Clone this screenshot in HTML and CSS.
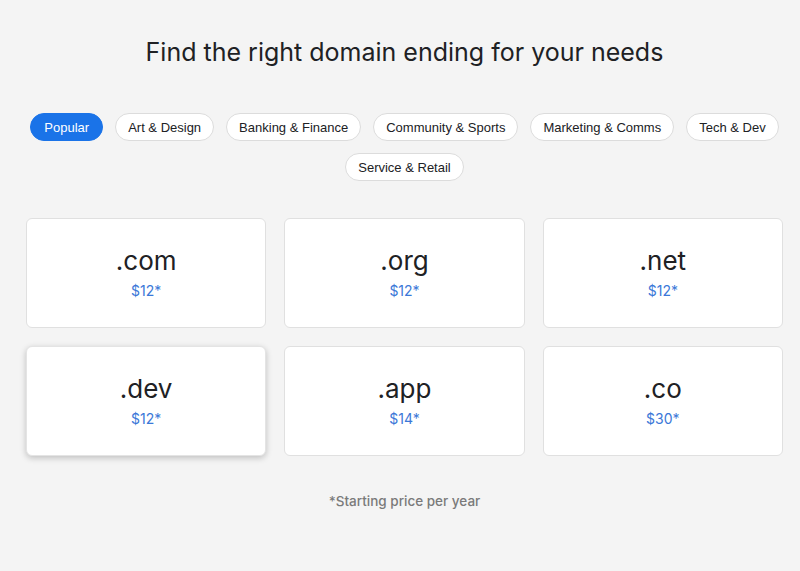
FILE: index.html
```html
<!doctype html>
<html lang="en">
  <head>
    <meta charset="UTF-8" />
    <meta name="viewport" content="width=device-width, initial-scale=1.0" />
    <title>Domain endings</title>
    <link rel="stylesheet" href="styles.css">
  </head>
  <body>
    <div class="page">
      <h1>Find the right domain ending for your needs</h1>

      <div class="chips">
        <button class="chip active">Popular</button>
        <button class="chip">Art &amp; Design</button>
        <button class="chip">Banking &amp; Finance</button>
        <button class="chip">Community &amp; Sports</button>
        <button class="chip">Marketing &amp; Comms</button>
        <button class="chip">Tech &amp; Dev</button>
        <button class="chip">Service &amp; Retail</button>
      </div>

      <div class="grid">
        <div class="card">
          <div class="tld">.com</div>
          <div class="price">$12*</div>
        </div>
        <div class="card">
          <div class="tld">.org</div>
          <div class="price">$12*</div>
        </div>
        <div class="card">
          <div class="tld">.net</div>
          <div class="price">$12*</div>
        </div>
        <div class="card hover">
          <div class="tld">.dev</div>
          <div class="price">$12*</div>
        </div>
        <div class="card">
          <div class="tld">.app</div>
          <div class="price">$14*</div>
        </div>
        <div class="card">
          <div class="tld">.co</div>
          <div class="price">$30*</div>
        </div>
      </div>

      <p class="note">*Starting price per year</p>
    </div>
  </body>
</html>
```

FILE: styles.css
```css
body {
  margin: 0;
  background-color: #f4f4f4;
  font-family: Inter, "Liberation Sans", sans-serif;
}
.page {
  width: 757px;
  margin-left: 26px;
  padding-top: 36px;
}
h1 {
  margin: 0;
  font-size: 25px;
  line-height: 32px;
  font-weight: 400;
  color: #202124;
  text-align: center;
}
.chips {
  margin-top: 45px;
  display: flex;
  flex-wrap: wrap;
  justify-content: center;
  gap: 12px;
}
.chip {
  height: 28px;
  padding: 0 12px;
  border: 1px solid #dcdcdc;
  border-radius: 14px;
  background: white;
  color: #202124;
  font-family: "Liberation Sans", Arial, sans-serif;
  font-size: 13px;
  cursor: pointer;
}
.chip.active {
  padding: 0 13px;
  background: #1a73e8;
  border-color: #1a73e8;
  color: white;
}
.grid {
  margin-top: 37px;
  display: grid;
  grid-template-columns: repeat(3, 1fr);
  grid-auto-rows: 110px;
  gap: 18px;
}
.card {
  background: white;
  border: 1px solid #e0e0e0;
  border-radius: 6px;
  display: flex;
  flex-direction: column;
  align-items: center;
  justify-content: center;
  gap: 4px;
}
.card.hover {
  border-color: #e4e4e4;
  box-shadow: 0 2px 6px rgba(0, 0, 0, 0.22);
}
.tld {
  font-size: 26px;
  line-height: 32px;
  color: #202124;
}
.price {
  font-size: 14px;
  line-height: 20px;
  color: #3b78d8;
}
.note {
  margin: 35px 0 0;
  font-size: 13.5px;
  line-height: 20px;
  font-weight: 500;
  color: #7a7a7a;
  text-align: center;
}
```
